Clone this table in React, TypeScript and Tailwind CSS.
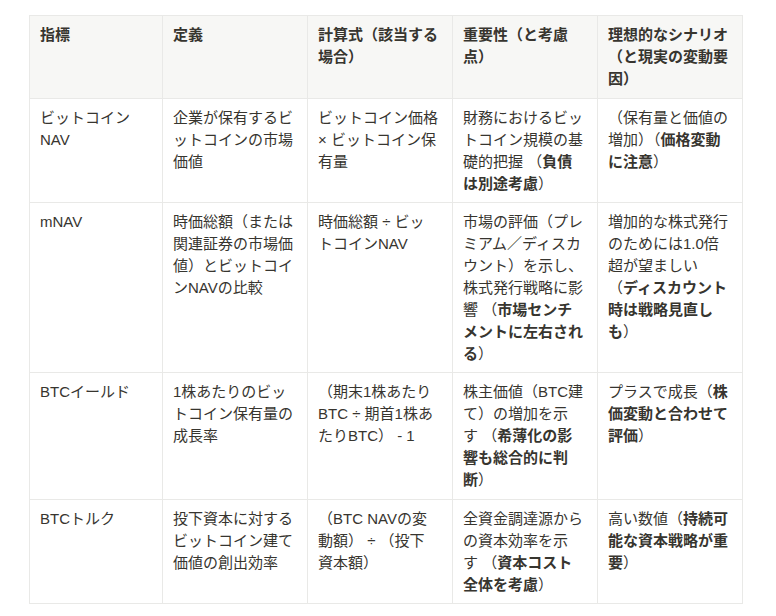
import type { ReactNode } from 'react';

// Bold span used inside cells (parentheses stay regular weight)
function B({ children }: { children: ReactNode }) {
  return <strong className="font-semibold">{children}</strong>;
}

const header: ReactNode[] = [
  '指標',
  '定義',
  <>計算式（該当する<br />場合）</>,
  <>重要性（と考慮<br />点）</>,
  <>理想的なシナリオ<br />（と現実の変動要<br />因）</>,
];

const rows: ReactNode[][] = [
  [
    <>ビットコイン<br />NAV</>,
    <>企業が保有するビ<br />ットコインの市場<br />価値</>,
    <>ビットコイン価格<br />× ビットコイン保<br />有量</>,
    <>財務におけるビッ<br />トコイン規模の基<br />礎的把握 （<B>負債</B><br /><B>は別途考慮</B>）</>,
    <>（保有量と価値の<br />増加）（<B>価格変動</B><br /><B>に注意</B>）</>,
  ],
  [
    'mNAV',
    <>時価総額（または<br />関連証券の市場価<br />値）とビットコイ<br />ンNAVの比較</>,
    <>時価総額 ÷ ビッ<br />トコインNAV</>,
    <>市場の評価（プレ<br />ミアム／ディスカ<br />ウント）を示し、<br />株式発行戦略に影<br />響 （<B>市場センチ</B><br /><B>メントに左右され</B><br /><B>る</B>）</>,
    <>増加的な株式発行<br />のためには1.0倍<br />超が望ましい<br />（<B>ディスカウント</B><br /><B>時は戦略見直し</B><br /><B>も</B>）</>,
  ],
  [
    'BTCイールド',
    <>1株あたりのビッ<br />トコイン保有量の<br />成長率</>,
    <>（期末1株あたり<br />BTC ÷ 期首1株あ<br />たりBTC） - 1</>,
    <>株主価値（BTC建<br />て）の増加を示<br />す （<B>希薄化の影</B><br /><B>響も総合的に判</B><br /><B>断</B>）</>,
    <>プラスで成長（<B>株</B><br /><B>価変動と合わせて</B><br /><B>評価</B>）</>,
  ],
  [
    'BTCトルク',
    <>投下資本に対する<br />ビットコイン建て<br />価値の創出効率</>,
    <>（BTC NAVの変<br />動額） ÷ （投下<br />資本額）</>,
    <>全資金調達源から<br />の資本効率を示<br />す （<B>資本コスト</B><br /><B>全体を考慮</B>）</>,
    <>高い数値（<B>持続可</B><br /><B>能な資本戦略が重</B><br /><B>要</B>）</>,
  ],
];

const cell =
  'border-r border-b border-[#e9e9e7] pl-[10px] pr-1 pt-2 whitespace-nowrap align-top';

export default function App() {
  return (
    <div className="min-h-screen bg-white pl-[29px] pt-[15px] text-[15px] leading-[22px] text-[#37352f] font-['Liberation_Sans','Noto_Sans_CJK_JP',sans-serif]">
      <div className="grid w-fit grid-cols-[133px_145px_145px_145px_145px] border-l border-t border-[#e9e9e7]">
        {header.map((h, i) => (
          <div key={i} className={`${cell} pb-2 bg-[#f7f7f5] font-semibold`}>
            {h}
          </div>
        ))}
        {rows.map((row, r) =>
          row.map((c, i) => (
            <div key={`${r}-${i}`} className={`${cell} ${r === 2 ? 'pb-2' : 'pb-[7px]'}`}>
              {c}
            </div>
          )),
        )}
      </div>
    </div>
  );
}
